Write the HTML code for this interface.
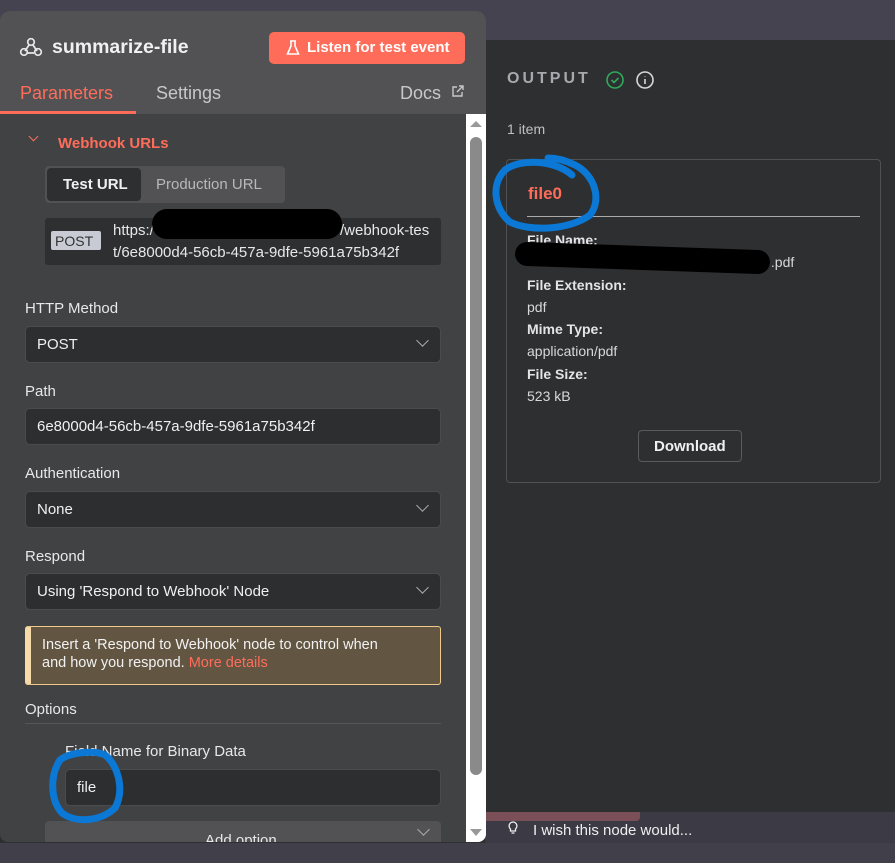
<!DOCTYPE html>
<html><head><meta charset="utf-8"><style>
*{box-sizing:border-box;margin:0;padding:0}
body{width:895px;height:863px;overflow:hidden;background:#2e2f30;font-family:"Liberation Sans",sans-serif;position:relative;color:#e4e4e7}
.a{position:absolute}
.lbl{font-size:15px;color:#e8e8ea}
.in{position:absolute;left:25px;width:416px;height:37px;background:#2d2e2f;border:1px solid #4a4b4e;border-radius:5px;font-size:15px;color:#f0f0f0;padding:9px 11px}
.chev{position:absolute;right:13px;top:9px;width:9px;height:9px;border-right:1.5px solid #aaa;border-bottom:1.5px solid #aaa;transform:rotate(45deg)}
.k{font-size:14px;font-weight:bold;color:#e4e4e7}
.v{font-size:14px;color:#d8d8dc}
</style></head><body>
<div class="a" style="left:0;top:0;width:895px;height:40px;background:#44434f"></div>
<div class="a" style="left:0;top:843px;width:895px;height:20px;background:#403f4a"></div>
<div class="a" style="left:485px;top:812px;width:410px;height:31px;background:#3c3b45"></div>
<div class="a" style="left:485px;top:812px;width:155px;height:9px;background:#7b4f58;border-radius:0 0 4px 0"></div>
<svg class="a" style="left:508px;top:821px" width="10" height="16" viewBox="0 0 10 16" fill="none" stroke="#eee" stroke-width="1.3"><path d="M5 1a4 4 0 0 0-2.5 7v2h5V8A4 4 0 0 0 5 1zM3.5 12h3"/></svg>
<div class="a" style="left:533px;top:822px;font-size:15px;color:#eee">I wish this node would...</div>

<!-- left panel -->
<div class="a" style="left:0;top:11px;width:486px;height:831px;background:#414244;border-radius:10px 10px 8px 8px;overflow:hidden">
 <div class="a" style="left:0;top:0;width:486px;height:103px;background:#525254"></div>
 <svg class="a" style="left:19px;top:25px" width="24" height="22" viewBox="0 0 24 22" fill="none" stroke="#e8e8e8" stroke-width="1.7"><circle cx="12" cy="6" r="3.3"/><circle cx="5" cy="16" r="3.3"/><circle cx="19" cy="16" r="3.3"/><path d="M10 9l-4 6M14 9l4 6M8 17h7"/></svg>
 <div class="a" style="left:52px;top:25px;font-size:19.5px;font-weight:bold;color:#f0f0f0">summarize-file</div>
 <div class="a" style="left:269px;top:21px;width:196px;height:32px;background:#ff6d5a;border-radius:5px;color:#fff;font-size:15px;font-weight:bold;padding:7px 0 0 38px">Listen for test event</div>
 <svg class="a" style="left:286px;top:29px" width="14" height="16" viewBox="0 0 14 16" fill="none" stroke="#fff" stroke-width="1.6"><path d="M4 1h6M5 1v5L1.5 14h11L9 6V1"/></svg>
 <div class="a" style="left:20px;top:72px;font-size:18px;color:#ff6d5a">Parameters</div>
 <div class="a" style="left:0;top:100px;width:136px;height:3px;background:#ff6d5a"></div>
 <div class="a" style="left:156px;top:72px;font-size:18px;color:#c8c8cc">Settings</div>
 <div class="a" style="left:400px;top:72px;font-size:18px;color:#c8c8cc">Docs</div>
 <svg class="a" style="left:451px;top:74px" width="13" height="13" viewBox="0 0 13 13" fill="none" stroke="#c8c8cc" stroke-width="1.4"><path d="M6 2H2v9h9V7M8 1h4v4M12 1L6 7"/></svg>
 <!-- scrollbar -->
 <div class="a" style="left:466px;top:103px;width:20px;height:728px;background:#fff"></div>
 <div class="a" style="left:470px;top:126px;width:12px;height:638px;background:#8a8a8a;border-radius:6px"></div>
 <div class="a" style="left:470px;top:110px;width:0;height:0;border-left:6px solid transparent;border-right:6px solid transparent;border-bottom:6px solid #999"></div>
 <div class="a" style="left:470px;top:818px;width:0;height:0;border-left:6px solid transparent;border-right:6px solid transparent;border-top:7px solid #999"></div>
 <div class="a" style="left:30px;top:122px;width:7px;height:7px;border-right:1.7px solid #ff6d5a;border-bottom:1.7px solid #ff6d5a;transform:rotate(45deg)"></div>
 <div class="a" style="left:58px;top:124px;font-size:15px;font-weight:bold;color:#ff6d5a">Webhook URLs</div>
 <div class="a" style="left:45px;top:155px;width:240px;height:37px;background:#525254;border-radius:4px"></div>
 <div class="a" style="left:47px;top:157px;width:94px;height:33px;background:#2e2f30;border-radius:4px;font-size:15px;font-weight:bold;color:#f0f0f0;padding:8px 0 0 16px">Test URL</div>
 <div class="a" style="left:156px;top:165px;font-size:15px;color:#b8b8bc">Production URL</div>
 <div class="a" style="left:45px;top:207px;width:396px;height:47px;background:#2e2f30;border-radius:3px"></div>
 <div class="a" style="left:51px;top:220px;width:50px;height:19px;background:#c8cad4;border-radius:2px;color:#333;font-size:14px;padding:2px 0 0 4px">POST</div>
 <div class="a" style="left:113px;top:209px;font-size:15px;line-height:22px;color:#e8e8ea">https:/</div>
 <div class="a" style="left:340px;top:209px;font-size:15px;line-height:22px;color:#e8e8ea">/webhook-tes</div>
 <div class="a" style="left:113px;top:231px;font-size:15px;line-height:22px;color:#e8e8ea">t/6e8000d4-56cb-457a-9dfe-5961a75b342f</div>
 <div class="a" style="left:152px;top:198px;width:190px;height:30px;background:#000;border-radius:15px"></div>
 <div class="a lbl" style="left:25px;top:289px">HTTP Method</div>
 <div class="in" style="top:315px">POST<div class="chev"></div></div>
 <div class="a lbl" style="left:25px;top:372px">Path</div>
 <div class="in" style="top:397px">6e8000d4-56cb-457a-9dfe-5961a75b342f</div>
 <div class="a lbl" style="left:25px;top:454px">Authentication</div>
 <div class="in" style="top:480px">None<div class="chev"></div></div>
 <div class="a lbl" style="left:25px;top:537px">Respond</div>
 <div class="in" style="top:562px">Using 'Respond to Webhook' Node<div class="chev"></div></div>
 <div class="a" style="left:25px;top:615px;width:416px;height:59px;background:#625542;border:1px solid #f0c98a;border-left:6px solid #f5d9a8;border-radius:3px;font-size:14.5px;line-height:18px;color:#f2f2f2;padding:9px 0 0 11px">Insert a 'Respond to Webhook' node to control when<br>and how you respond. <span style="color:#ff6d5a">More details</span></div>
 <div class="a lbl" style="left:25px;top:690px">Options</div>
 <div class="a" style="left:25px;top:712px;width:416px;height:1px;background:#55565a"></div>
 <div class="a lbl" style="left:65px;top:732px">Field Name for Binary Data</div>
 <div class="in" style="left:65px;width:376px;top:758px">file</div>
 <div class="a" style="left:45px;top:810px;width:396px;height:30px;background:#525254;border-radius:4px;font-size:15px;color:#e8e8ea;padding:11px 0 0 160px">Add option<div class="chev" style="top:4px"></div></div>
</div>

<!-- right panel -->
<div class="a" style="left:507px;top:70px;font-size:16px;font-weight:bold;letter-spacing:3px;color:#a8a8ae">OUTPUT</div>
<svg class="a" style="left:605px;top:70px" width="20" height="20" viewBox="0 0 20 20" fill="none" stroke="#2faa5c" stroke-width="1.6"><circle cx="10" cy="10" r="8"/><path d="M6.5 10l2.5 2.5 4.5-4.5"/></svg>
<svg class="a" style="left:635px;top:70px" width="20" height="20" viewBox="0 0 20 20" fill="none" stroke="#d8d8dc" stroke-width="1.6"><circle cx="10" cy="10" r="8"/><path d="M10 9v5M10 6v.5"/></svg>
<div class="a" style="left:507px;top:121px;font-size:14px;color:#c0c0c4">1 item</div>
<div class="a" style="left:506px;top:159px;width:375px;height:324px;border:1px solid #505154;border-radius:4px"></div>
<div class="a" style="left:528px;top:184px;font-size:17px;font-weight:bold;color:#ff6d5a">file0</div>
<div class="a" style="left:527px;top:216px;width:333px;height:1px;background:#aaa"></div>
<div class="a" style="left:527px;top:229px;line-height:22.3px">
<div class="k">File Name:</div><div class="v">&nbsp;<span style="margin-left:240px">.pdf</span></div>
<div class="k">File Extension:</div><div class="v">pdf</div>
<div class="k">Mime Type:</div><div class="v">application/pdf</div>
<div class="k">File Size:</div><div class="v">523 kB</div></div>
<div class="a" style="left:515px;top:246px;width:255px;height:24px;background:#000;border-radius:12px;transform:rotate(2deg)"></div>
<div class="a" style="left:638px;top:430px;width:104px;height:32px;border:1px solid #5a5b5e;border-radius:4px;font-size:15px;font-weight:bold;color:#f0f0f0;padding:7px 0 0 15px">Download</div>

<!-- blue annotations -->
<svg class="a" style="left:0;top:0" width="895" height="863" fill="none" stroke="#0a78d4" stroke-width="7" stroke-linecap="round">
<path d="M572 175C555 160 520 158 505 170C490 185 495 210 510 222C530 232 570 230 590 215C602 200 595 175 575 165C565 160 555 158 548 158"/>
<path d="M60 760C50 775 50 800 62 813C75 823 100 822 115 808C125 790 118 765 105 755C95 750 70 752 60 760"/>
</svg>
</body></html>
